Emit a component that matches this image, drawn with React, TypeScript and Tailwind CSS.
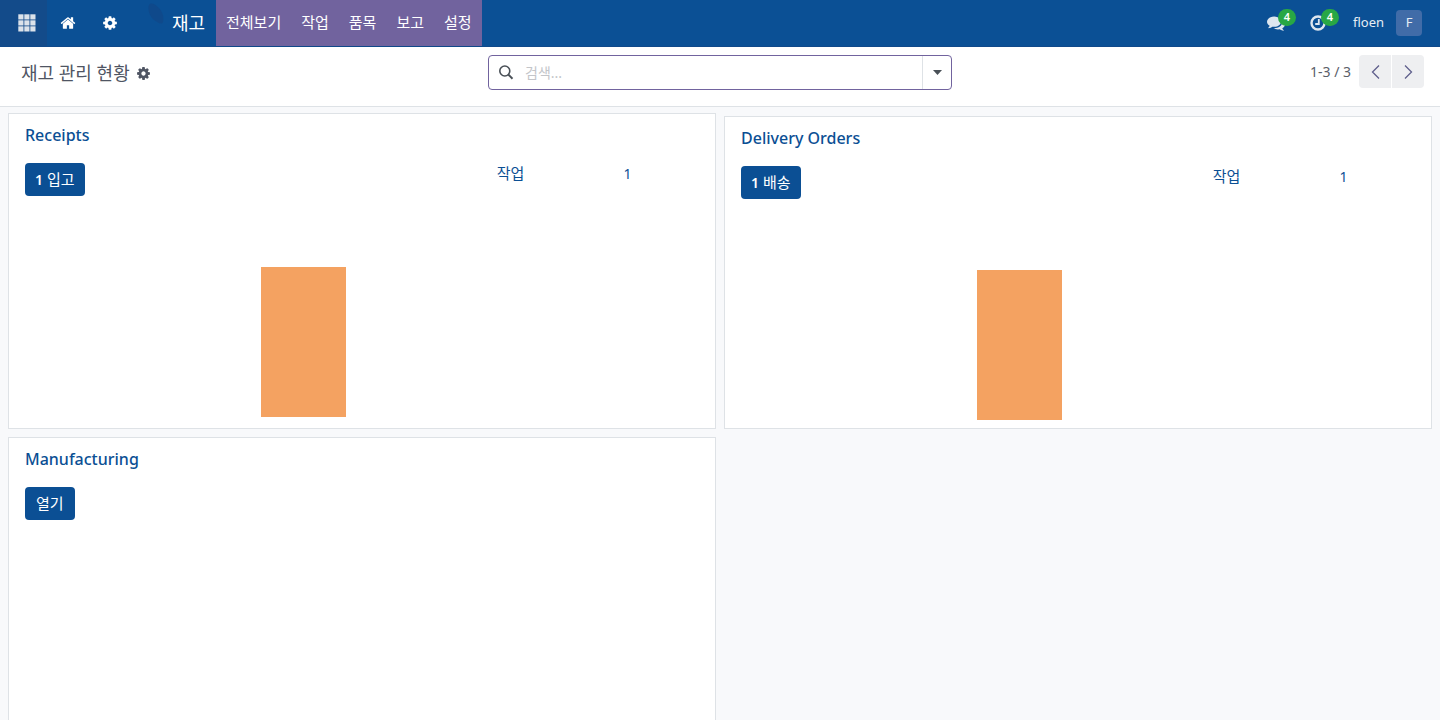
import { ReactNode } from 'react'
import clsx from 'clsx'

type Operation = {
  name: string
  count?: number
  action: string
  backlog?: number
  bars?: number[]
}

const operations: Operation[] = [
  { name: 'Receipts', count: 1, action: '입고', backlog: 1, bars: [0, 0, 1, 0, 0, 0] },
  { name: 'Delivery Orders', count: 1, action: '배송', backlog: 1, bars: [0, 0, 1, 0, 0, 0] },
  { name: 'Manufacturing', action: '열기' },
]

const menus = ['전체보기', '작업', '품목', '보고', '설정']

const HOME =
  'M1472 992v480q0 26-19 45t-45 19h-384v-384h-256v384h-384q-26 0-45-19t-19-45v-480q0-1 .5-3t.5-3l575-474 575 474q1 2 1 6zm223-69l-62 74q-8 9-21 11h-3q-13 0-21-7l-692-577-692 577q-12 8-24 7-13-2-21-11l-62-74q-8-10-7-23.5t11-21.5l719-599q32-26 76-26t76 26l244 204v-195q0-14 9-23t23-9h192q14 0 23 9t9 23v408l219 182q10 8 11 21.5t-7 23.5z'
const COG =
  'M1152 896q0-106-75-181t-181-75-181 75-75 181 75 181 181 75 181-75 75-181zm512-109v222q0 12-8 23t-20 13l-185 28q-19 54-39 91 35 50 107 138 10 12 10 25t-9 23q-27 37-99 108t-94 71q-12 0-26-9l-138-108q-44 23-91 38-16 136-29 186-7 28-36 28h-222q-14 0-24.5-8.5t-11.5-21.5l-28-184q-49-16-90-37l-141 107q-10 9-25 9-14 0-25-11-126-114-165-168-7-10-7-23 0-12 8-23 15-21 51-66.5t54-70.5q-27-50-41-99l-183-27q-13-2-21-12.5t-8-23.5v-222q0-12 8-23t19-13l186-28q14-46 39-92-40-57-107-138-10-12-10-24 0-10 9-23 26-36 98.5-107.5t94.5-71.5q13 0 26 10l138 107q44-23 91-38 16-136 29-186 7-28 36-28h222q14 0 24.5 8.5t11.5 21.5l28 184q49 16 90 37l142-107q9-9 24-9 13 0 25 10 129 119 165 170 7 8 7 22 0 12-8 23-15 21-51 66.5t-54 70.5q26 50 41 98l183 28q13 2 21 12.5t8 23.5z'
const COMMENTS =
  'M1408 768q0 139-94 257t-256.5 186.5-353.5 68.5q-86 0-176-16-124 88-278 128-36 9-86 16h-3q-11 0-20.5-8t-11.5-21q-1-3-1-6.5t.5-6.5 2-6l2.5-5 3.5-5.5 4-5 4.5-5 4-4.5q5-6 23-25t26-29.5 22.5-29 25-38.5 20.5-44q-124-72-195-177t-71-224q0-139 94-257t256.5-186.5 353.5-68.5 353.5 68.5 256.5 186.5 94 257zm384 256q0 120-71 224.5t-195 176.5q10 24 20.5 44t25 38.5 22.5 29 26 29.5 23 25q1 1 4 4.5t4.5 5 4 5 3.5 5.5l2.5 5 2 6 .5 6.5-1 6.5q-3 14-13 22t-22 7q-50-7-86-16-154-40-278-128-90 16-176 16-271 0-472-132 58 4 88 4 161 0 309-45t264-129q125-92 192-212t67-254q0-77-23-152 129 71 204 178t75 230z'

function Icon({ path, className }: { path: string; className?: string }) {
  return (
    <svg viewBox="0 0 1792 1792" fill="currentColor" aria-hidden="true" className={className}>
      <path d={path} />
    </svg>
  )
}

function SystrayButton({ label, count, children }: { label: string; count: number; children: ReactNode }) {
  return (
    <button aria-label={label} className="relative flex h-full w-[43px] items-center text-[#dde6ef]">
      {children}
      <span className="absolute top-[9px] left-[11px] flex h-[17px] w-[18px] items-center justify-center rounded-full bg-[#28a745] text-[11px] font-semibold text-white">
        {count}
      </span>
    </button>
  )
}

function Navbar() {
  return (
    <header className="flex h-[47px] shrink-0 items-stretch border-b border-[#10498a] bg-[#0b5095] text-white">
      <button aria-label="Apps" className="flex w-[47px] items-center justify-center bg-[#134b8a] pl-1.5 text-[#dbe2ea]">
        <svg width="18" height="18" viewBox="0 0 18 18" fill="currentColor" aria-hidden="true">
          {[0, 6, 12].map((y) =>
            [0, 6, 12].map((x) => <rect key={`${x}-${y}`} x={x + 0.3} y={y + 0.3} width="5.2" height="5.2" />)
          )}
        </svg>
      </button>
      <button aria-label="Home" className="flex w-[42px] items-center justify-center">
        <Icon path={HOME} className="h-4 w-4" />
      </button>
      <button aria-label="Settings" className="flex w-[42px] items-center justify-center">
        <Icon path={COG} className="h-4 w-4" />
      </button>
      <div className="flex w-9 justify-end pt-[3px]">
        <svg width="20" height="22" viewBox="0 0 20 22" className="shrink-0" aria-hidden="true">
          <path d="M2 2C4-1 8 1 12 5s5 10 4 14c-1 3-5 1-9-2S0 6 2 2Z" fill="#0f498b" />
        </svg>
      </div>
      <a href="#" className="flex w-[49px] items-center pl-[5px] text-lg">
        재고
      </a>
      <nav className="flex bg-[#71639e]">
        {menus.map((menu) => (
          <a key={menu} href="#" className="flex items-center px-2.5 pb-0.5 text-[15px]">
            {menu}
          </a>
        ))}
      </nav>
      <div className="ml-auto flex items-center pr-[18px]">
        <SystrayButton label="Messages" count={4}>
          <Icon path={COMMENTS} className="h-[18px] w-[18px]" />
        </SystrayButton>
        <SystrayButton label="Activities" count={4}>
          <svg width="16" height="16" viewBox="0 0 16 16" fill="none" stroke="currentColor" strokeWidth="2.4" aria-hidden="true">
            <circle cx="8" cy="8" r="6.5" />
            <path d="M8.8 4v5H5.2" strokeWidth="1.8" />
          </svg>
        </SystrayButton>
        <button className="flex h-full items-center gap-3 text-[13px] text-[#e6edf4]">
          floen
          <span className="flex h-[26px] w-[26px] items-center justify-center rounded bg-[#416ca8] text-[13px]">F</span>
        </button>
      </div>
    </header>
  )
}

function ControlPanel() {
  return (
    <div className="grid h-[60px] shrink-0 grid-cols-[1fr_464px_1fr] items-start border-b border-[#dee2e6] bg-white px-4 pt-2">
      <div className="flex h-9 items-center gap-1.5 pl-[5px] text-[#4f5563]">
        <h1 className="text-lg">재고 관리 현황</h1>
        <button aria-label="Actions">
          <Icon path={COG} className="h-[15px] w-[15px]" />
        </button>
      </div>
      <div className="flex h-[35px] overflow-hidden rounded border border-[#71639e]">
        <label htmlFor="search" aria-label="검색" className="flex w-9 items-center pl-2.5 text-[#495057]">
          <svg width="15" height="15" viewBox="0 0 15 15" fill="none" stroke="currentColor" aria-hidden="true">
            <circle cx="5.8" cy="6" r="5" strokeWidth="1.6" />
            <path d="M9.500 9.700l4 4" strokeWidth="2" />
          </svg>
        </label>
        <input
          id="search"
          type="text"
          placeholder="검색..."
          className="min-w-0 flex-1 text-sm outline-none placeholder:text-[#c3c5c9]"
        />
        <button aria-label="Filters" className="flex w-[29px] items-center justify-center border-l border-[#dee2e6] text-[#495057]">
          <svg width="9" height="5" viewBox="0 0 9 5" fill="currentColor" aria-hidden="true">
            <path d="M0 0h9L4.500 5z" />
          </svg>
        </button>
      </div>
      <div className="flex items-center justify-end gap-2">
        <span className="text-sm text-[#5b6069]">1-3 / 3</span>
        <div className="flex gap-px text-[#5f5f8c]">
          <button aria-label="Previous" className="flex h-[33px] w-8 items-center justify-center rounded-l bg-[#eeeff1]">
            <svg width="9" height="14" viewBox="0 0 9 14" fill="none" stroke="currentColor" strokeWidth="1.3" aria-hidden="true">
              <path d="M8 .5L1.500 7 8 13.500" />
            </svg>
          </button>
          <button aria-label="Next" className="flex h-[33px] w-8 items-center justify-center rounded-r bg-[#eeeff1]">
            <svg width="9" height="14" viewBox="0 0 9 14" fill="none" stroke="currentColor" strokeWidth="1.3" aria-hidden="true">
              <path d="M1 .5L7.500 7 1 13.500" />
            </svg>
          </button>
        </div>
      </div>
    </div>
  )
}

function BarChart({ bars }: { bars: number[] }) {
  const max = Math.max(...bars)
  return (
    <div className="grid h-full grid-cols-6 items-end">
      {bars.map((value, i) => (
        <div key={i} className="mx-auto w-[72%] bg-[#f4a261]" style={{ height: `${(value / max) * 100}%` }} />
      ))}
    </div>
  )
}

function OperationCard({ operation, className }: { operation: Operation; className?: string }) {
  return (
    <article className={clsx('border border-[#dee2e6] bg-white', className)}>
      <div className="px-4 pt-2">
        <h2 className="text-base leading-[26px] font-medium text-[#0b4f94]">
          <a href="#">{operation.name}</a>
        </h2>
        <div className="mt-[15px] flex items-start">
          <div className="w-[70%]">
            <button
              className={clsx(
                'flex h-[33px] items-center gap-1 rounded bg-[#0b4f94] text-[15px] text-white',
                operation.count ? 'px-2.5' : 'px-[11px]'
              )}
            >
              {operation.count && <span className="text-sm font-semibold">{operation.count}</span>}
              {operation.action}
            </button>
          </div>
          {operation.backlog && (
            <a href="#" className="flex w-[20%] justify-between text-[15px] leading-[21px] text-[#0b4f94]">
              <span>작업</span>
              <span className="text-sm leading-[21px]">{operation.backlog}</span>
            </a>
          )}
        </div>
      </div>
      <div className="mt-[71px] mb-2 h-[150px]">{operation.bars && <BarChart bars={operation.bars} />}</div>
    </article>
  )
}

export default function App() {
  return (
    <div className="flex h-screen flex-col bg-[#f8f9fb] font-['Noto_Sans','Noto_Sans_CJK_KR',sans-serif]">
      <Navbar />
      <ControlPanel />
      <main className="min-h-0 flex-1 overflow-y-auto [scrollbar-width:none]">
        <div className="grid grid-cols-2 gap-2 px-2 pt-1.5 pb-2">
          {operations.map((operation, i) => (
            <OperationCard key={operation.name} operation={operation} className={i === 1 ? 'mt-[3px]' : ''} />
          ))}
        </div>
      </main>
    </div>
  )
}
